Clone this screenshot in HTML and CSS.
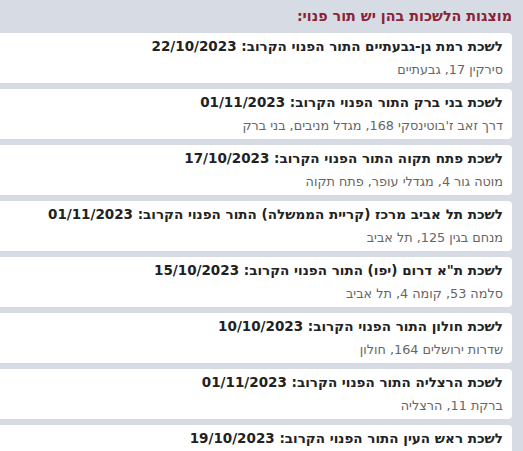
FILE: index.html
```html
<!DOCTYPE html>
<html lang="he" dir="rtl">
<head>
<meta charset="utf-8">
<link rel="stylesheet" href="styles.css">
</head>
<body>
<div class="page">
  <h2 class="heading">מוצגות הלשכות בהן יש תור פנוי:</h2>
  <ul class="list">
    <li class="card">
      <div class="title">לשכת רמת גן-גבעתיים התור הפנוי הקרוב: 22/10/2023</div>
      <div class="addr">סירקין 17, גבעתיים</div>
    </li>
    <li class="card">
      <div class="title">לשכת בני ברק התור הפנוי הקרוב: 01/11/2023</div>
      <div class="addr">דרך זאב ז'בוטינסקי 168, מגדל מניבים, בני ברק</div>
    </li>
    <li class="card">
      <div class="title">לשכת פתח תקוה התור הפנוי הקרוב: 17/10/2023</div>
      <div class="addr">מוטה גור 4, מגדלי עופר, פתח תקוה</div>
    </li>
    <li class="card">
      <div class="title">לשכת תל אביב מרכז (קריית הממשלה) התור הפנוי הקרוב: 01/11/2023</div>
      <div class="addr">מנחם בגין 125, תל אביב</div>
    </li>
    <li class="card">
      <div class="title">לשכת ת"א דרום (יפו) התור הפנוי הקרוב: 15/10/2023</div>
      <div class="addr">סלמה 53, קומה 4, תל אביב</div>
    </li>
    <li class="card">
      <div class="title">לשכת חולון התור הפנוי הקרוב: 10/10/2023</div>
      <div class="addr">שדרות ירושלים 164, חולון</div>
    </li>
    <li class="card">
      <div class="title">לשכת הרצליה התור הפנוי הקרוב: 01/11/2023</div>
      <div class="addr">ברקת 11, הרצליה</div>
    </li>
    <li class="card">
      <div class="title">לשכת ראש העין התור הפנוי הקרוב: 19/10/2023</div>
      <div class="addr">ראש העין</div>
    </li>
  </ul>
</div>
</body>
</html>
```

FILE: styles.css
```css
html, body {
  margin: 0;
  padding: 0;
  height: 100%;
  overflow: hidden;
}
body {
  background: #d7dbe3;
  font-family: "DejaVu Sans", "Liberation Sans", sans-serif;
  direction: rtl;
}
.page {
  padding: 7px 11px 0 0;
}
.heading {
  margin: 0 0 8px 0;
  font-size: 14.3px;
  font-weight: 700;
  color: #8b2337;
  line-height: 18px;
}
.list {
  list-style: none;
  margin: 0;
  padding: 0;
  width: 560px;
  display: flex;
  flex-direction: column;
  gap: 6px;
}
.card {
  background: #ffffff;
  border-radius: 4px;
  height: 50px;
  box-sizing: border-box;
  padding: 4px 9px 0 9px;
}
.title {
  font-size: 13.5px;
  font-weight: 700;
  color: #222;
  line-height: 18px;
}
.addr {
  margin-top: 6px;
  font-size: 12.8px;
  color: #666;
  line-height: 17px;
}
```
